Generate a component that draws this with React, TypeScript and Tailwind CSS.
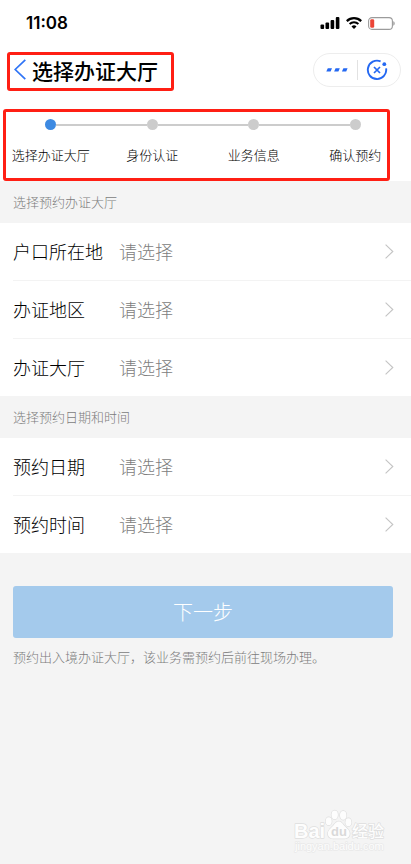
import React, { useState } from 'react';

interface Field {
  id: string;
  label: string;
}

const STEPS = ['选择办证大厅', '身份认证', '业务信息', '确认预约'];

const HALL_FIELDS: Field[] = [
  { id: 'household', label: '户口所在地' },
  { id: 'region', label: '办证地区' },
  { id: 'hall', label: '办证大厅' },
];

const TIME_FIELDS: Field[] = [
  { id: 'date', label: '预约日期' },
  { id: 'time', label: '预约时间' },
];

const StatusBar: React.FC = () => (
  <div className="flex h-[46px] items-center justify-between pl-[26px] pr-4">
    <span className="font-['Inter','Liberation_Sans',sans-serif] text-[17px] font-semibold leading-5 text-black">11:08</span>
    <div className="flex items-center gap-[6px]">
      {/* Signal */}
      <svg width="20" height="12" viewBox="0 0 20 12" aria-hidden="true">
        <rect x="0.5" y="7.5" width="3.6" height="4.5" rx="1" />
        <rect x="5.5" y="5.5" width="3.6" height="6.5" rx="1" />
        <rect x="10.6" y="3" width="3.6" height="9" rx="1" />
        <rect x="15.8" y="0" width="3.6" height="12" rx="1" />
      </svg>
      {/* Wifi */}
      <svg width="16" height="12" viewBox="0 0 16 12" fill="none" stroke="black" aria-hidden="true">
        <path d="M0.8 4.1a10.3 10.3 0 0 1 14.4 0" strokeWidth="2.2" />
        <path d="M3.6 7a6.3 6.3 0 0 1 8.8 0" strokeWidth="2" />
        <path d="M8 12L5.5 9.4a3.6 3.6 0 0 1 5 0z" fill="black" stroke="none" />
      </svg>
      {/* Battery */}
      <svg width="27" height="13" viewBox="0 0 27 13" aria-hidden="true">
        <rect x="0.6" y="0.6" width="23.8" height="11.8" rx="3.4" fill="white" stroke="#9b9b9b" strokeWidth="1.1" />
        <path d="M25.4 4.3c1.6.4 1.6 4 0 4.4z" fill="#8c8c8c" />
        <rect x="2.2" y="2.2" width="4" height="8.6" rx="1.4" fill="#eb4537" />
      </svg>
    </div>
  </div>
);

const NavBar: React.FC = () => (
  <header className="flex items-start justify-between pl-[7px] pr-[10px] pt-[6px]">
    <div className="flex h-[39px] items-center rounded-[3px] border-[3px] border-[#ff1f14] pb-1 pl-1 pr-[13px]">
      <button type="button" aria-label="返回" className="mr-[6px]">
        <svg width="12" height="21" viewBox="0 0 12 21" fill="none" stroke="#2f74f6" strokeWidth="1.7" aria-hidden="true">
          <path d="M11.3 0.8L1.2 10.5l10.1 9.7" />
        </svg>
      </button>
      <h1 className="whitespace-nowrap text-[21px] font-medium leading-7 text-black">选择办证大厅</h1>
    </div>
    <div className="mt-px flex h-[34px] w-[88px] items-center rounded-full border border-[#ededed]">
      <button type="button" aria-label="更多" className="flex flex-1 justify-center pl-1">
        <svg width="22" height="4" viewBox="0 0 22 4" fill="#2468f2" aria-hidden="true">
          <path d="M1.8 0.3H6L4.6 3.6H0.3zM9.6 0.3h4.2l-1.4 3.3H8.1zM17.4 0.3h4.2l-1.4 3.3h-4.3z" />
        </svg>
      </button>
      <span className="h-5 w-px bg-[#e2e2e2]" />
      <button type="button" aria-label="关闭" className="flex flex-1 justify-center pr-1">
        <svg width="22" height="22" viewBox="0 0 22 22" fill="none" stroke="#2468f2" aria-hidden="true">
          <path d="M14.6 2.4A9.2 9.2 0 1 0 20.1 9.4" strokeWidth="1.9" />
          <circle cx="18.3" cy="5.2" r="1.9" fill="#2468f2" stroke="none" />
          <path d="M8 8l6 6M14 8l-6 6" strokeWidth="1.7" />
        </svg>
      </button>
    </div>
  </header>
);

const Steps: React.FC<{ current: number }> = ({ current }) => (
  <nav aria-label="预约步骤" className="relative mt-[18px] h-[72px] pr-[5px] pt-[10px]">
    <ol className="grid grid-cols-4">
      {STEPS.map((step, i) => (
        <li key={step} className="flex flex-col items-center">
          <div className="flex w-full items-center">
            <span className={`h-0.5 flex-1 ${i === 0 ? 'bg-transparent' : 'bg-[#cccccc]'}`} />
            <span className={`size-[11px] rounded-full ${i === current ? 'bg-[#3d8ae2]' : 'bg-[#cccccc]'}`} />
            <span className={`h-0.5 flex-1 ${i === STEPS.length - 1 ? 'bg-transparent' : 'bg-[#cccccc]'}`} />
          </div>
          <span className="mt-[15px] whitespace-nowrap text-[13px] font-light leading-5 text-black">{step}</span>
        </li>
      ))}
    </ol>
    <div className="pointer-events-none absolute inset-y-0 left-[3px] right-[21px] rounded-[3px] border-[3px] border-[#ff1f14]" />
  </nav>
);

const FieldGroup: React.FC<{ title: string; fields: Field[] }> = ({ title, fields }) => (
  <section>
    <h2 className="flex h-[42px] items-center bg-[#f4f4f4] pl-[13px] text-[13px] font-light text-[#7c7c7c]">{title}</h2>
    <div className="divide-y divide-[#f3f3f3] bg-white pl-[13px]">
      {fields.map(field => (
        <div key={field.id}>
          <button type="button" className="flex h-[57px] w-full items-center pr-[17px] text-left text-lg font-light">
            <span className="w-[106px] pb-0.5 text-black">{field.label}</span>
            <span className="flex-1 pb-0.5 text-[#808080]">请选择</span>
            <svg width="9" height="15" viewBox="0 0 9 15" fill="none" stroke="#c4c4c4" strokeWidth="1.1" aria-hidden="true">
              <path d="M0.6 0.6l7.2 6.9-7.2 6.9" />
            </svg>
          </button>
        </div>
      ))}
    </div>
  </section>
);

const Watermark: React.FC = () => (
  <svg
    className="absolute bottom-2 right-6"
    width="96"
    height="48"
    viewBox="290 808 96 48"
    fill="#fdfdfd"
    stroke="#dedede"
    strokeWidth="1.4"
    strokeLinejoin="round"
    paintOrder="stroke"
  >
    <text x="293" y="838" fontSize="20" fontWeight="700" className="font-['Liberation_Sans',sans-serif]">Bai</text>
    <ellipse cx="327.7" cy="821.3" rx="3" ry="4" />
    <ellipse cx="333.7" cy="814.8" rx="3.2" ry="4.4" />
    <ellipse cx="342.2" cy="815.3" rx="3.2" ry="4.4" />
    <ellipse cx="347.4" cy="822.3" rx="3" ry="4" />
    <path d="M337.7 821.5c-2.8 0-4 2.6-6 4.8-2.3 2.3-4.8 4-4.8 7.3 0 3.4 2.4 5 5.4 5h10.9c3.2 0 5.5-1.7 5.5-5 0-3.4-2.6-5-4.9-7.3-2-2.1-3.3-4.8-6.1-4.8z" />
    <text x="338" y="836" fontSize="13" fontWeight="700" textAnchor="middle" fill="#d9d9d9" stroke="none" className="font-['Liberation_Sans',sans-serif]">du</text>
    <text x="351" y="837" fontSize="16" fontWeight="500">经验</text>
    <text x="294" y="850" fontSize="11" stroke="#e9e9e9" className="font-['Liberation_Sans',sans-serif]">jingyan.baidu.com</text>
  </svg>
);

export default function App() {
  const [current] = useState(0);

  return (
    <div className="relative min-h-screen bg-[#f4f4f4] font-['Noto_Sans_CJK_SC',sans-serif]">
      <div className="bg-white">
        <StatusBar />
        <NavBar />
        <Steps current={current} />
      </div>
      <main>
        <FieldGroup title="选择预约办证大厅" fields={HALL_FIELDS} />
        <FieldGroup title="选择预约日期和时间" fields={TIME_FIELDS} />
        <div className="pl-[13px] pr-[18px] pt-[33px]">
          <button type="button" className="h-[52px] w-full rounded-[3px] bg-[#a4caec] text-xl font-light text-white">
            下一步
          </button>
          <p className="mt-[9px] text-[13px] font-light leading-5 text-[#7c7c7c]">预约出入境办证大厅，该业务需预约后前往现场办理。</p>
        </div>
      </main>
      <Watermark />
    </div>
  );
}
